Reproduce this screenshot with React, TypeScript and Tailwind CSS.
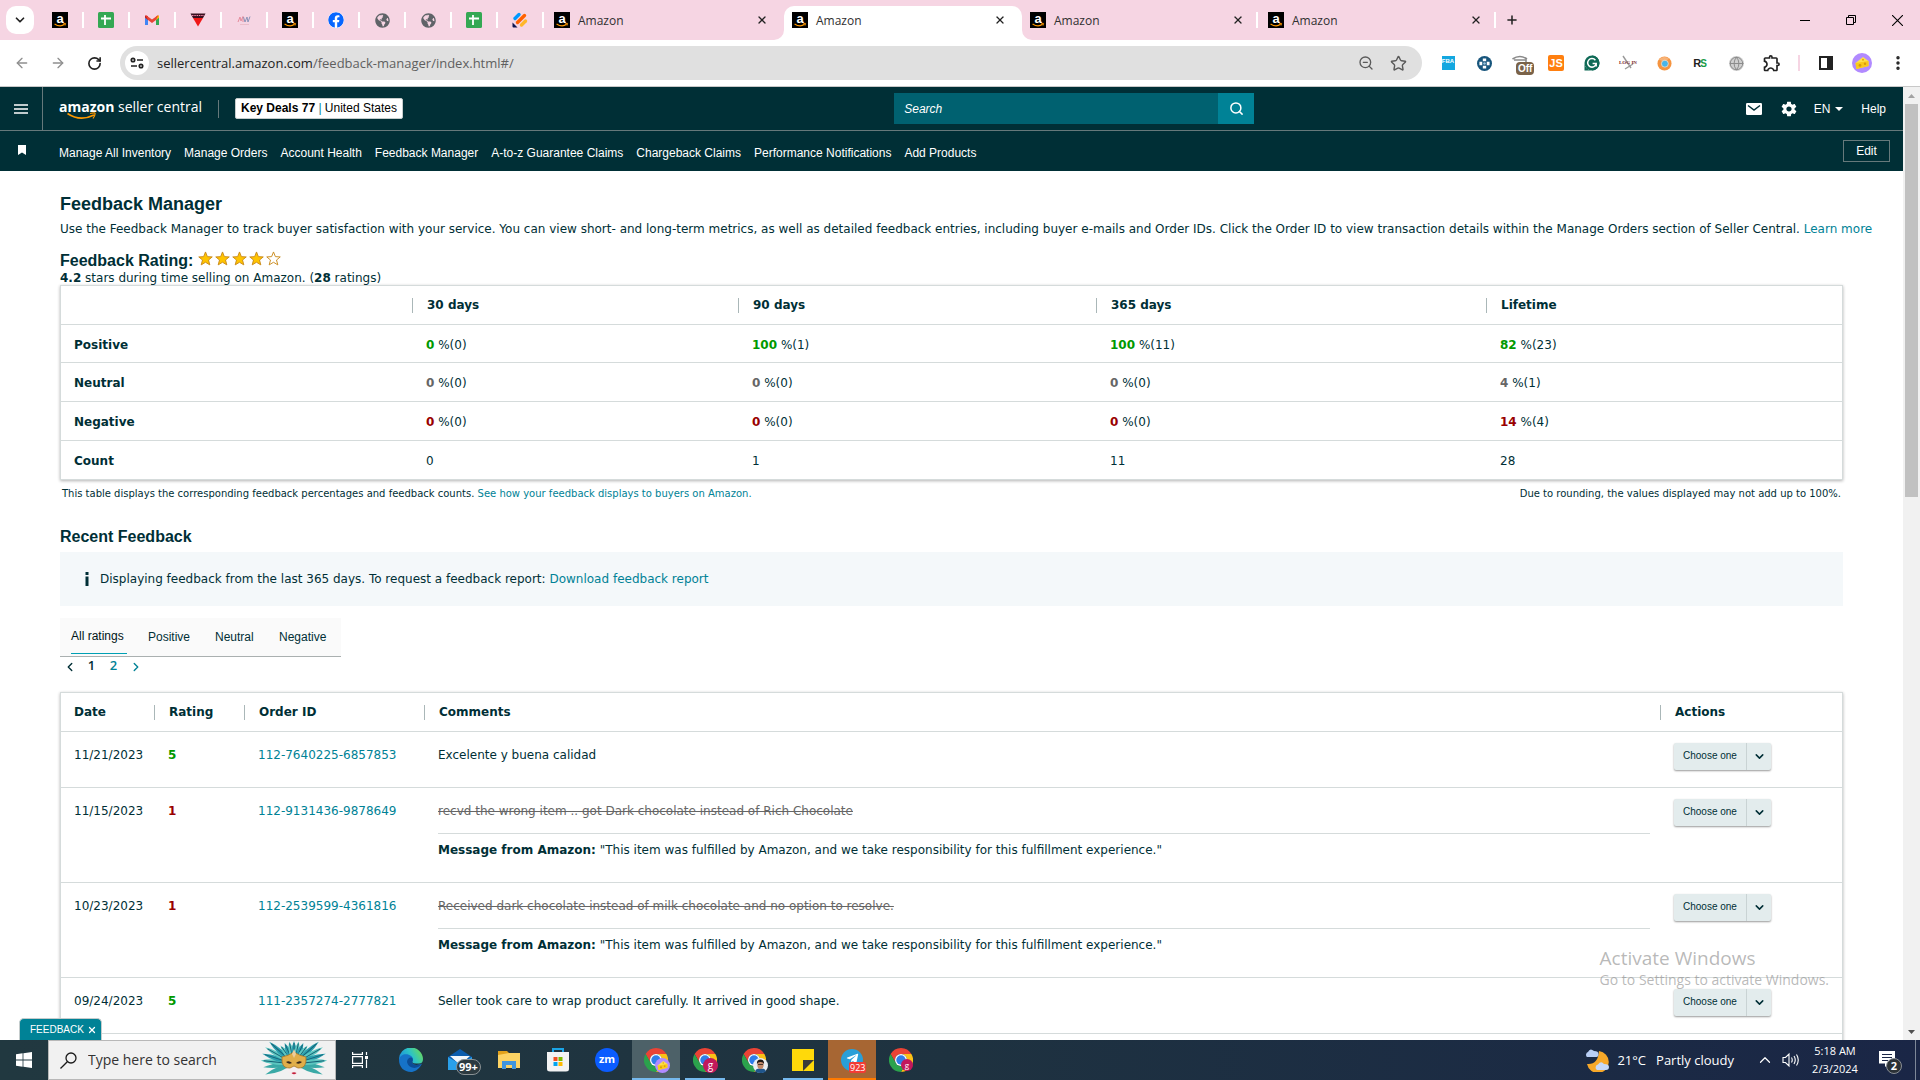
import { memo } from "react";
import type { ReactNode } from "react";
import { ArrowLeft, ArrowRight, ChevronDown, ChevronLeft, ChevronRight, ChevronUp, Globe, MoreVertical, Plus, RotateCw, Search, Star, X, ZoomOut } from "lucide-react";
import { FaFacebook, FaGlobeAmericas, FaTelegramPlane } from "react-icons/fa";
import { IoMdSettings } from "react-icons/io";
import { MdOutlineExtension } from "react-icons/md";

/* ---------- shared icons ---------- */

const AmazonIcon = memo(function AmazonIcon() {
  return (
    <svg viewBox="0 0 16 16" className="size-4 shrink-0 overflow-visible" aria-hidden="true">
      <rect width="16" height="16" fill="#000" />
      <text x="8" y="10.6" textAnchor="middle" fontSize="13" fontWeight="700" fill="#fff" fontFamily="Liberation Sans, sans-serif">
        a
      </text>
      <path d="M2.6 11.9Q8 15.6 12.6 12.3" fill="none" stroke="#f90" strokeWidth="1.2" />
      <path d="M11.3 11.6L13.6 11.4L13 13.6" fill="none" stroke="#f90" strokeWidth="0.9" />
    </svg>
  );
});

function SheetIcon() {
  return (
    <svg viewBox="0 0 16 16" className="size-4" aria-hidden="true">
      <rect width="16" height="16" rx="1.5" fill="#34a853" />
      <path d="M3 6.5H13M7 3V13" stroke="#fff" strokeWidth="1.8" />
    </svg>
  );
}

function GmailIcon() {
  return (
    <svg viewBox="0 0 16 16" className="size-4" aria-hidden="true">
      <path d="M1 4.5V13H4V7Z" fill="#4285f4" />
      <path d="M15 4.5V13H12V7Z" fill="#34a853" />
      <path d="M1 3.5L4 4V8L1 5.8Z" fill="#c5221f" />
      <path d="M15 3.5L12 4V8L15 5.8Z" fill="#fbbc04" />
      <path d="M1.4 2.8L8 7.6L14.6 2.8L12 8L8 11L4 8Z" fill="#ea4335" />
    </svg>
  );
}

function TriangleIcon() {
  return (
    <svg viewBox="0 0 16 16" className="size-4" aria-hidden="true">
      <path d="M0.5 1.5H15.5L13 6H3Z" fill="#3a1020" />
      <path d="M2 3.5H14" stroke="#e8a" strokeWidth="1" strokeDasharray="1.5 0.8" />
      <path d="M3 6H13L8 14.5Z" fill="#f01818" />
    </svg>
  );
}

function ScriptIcon() {
  return (
    <svg viewBox="0 0 16 16" className="size-4" aria-hidden="true">
      <path d="M2 10L4 5L5 9L7 4.5V10" fill="none" stroke="#e58a9a" strokeWidth="1" />
      <path d="M7.5 5L9 10L11 5L12 10L14 4.5" fill="none" stroke="#8b93b8" strokeWidth="1" />
      <path d="M4 12.5H13" stroke="#e9b8c4" strokeWidth="0.8" />
    </svg>
  );
}

function StripesIcon() {
  return (
    <svg viewBox="0 0 16 16" className="size-4" aria-hidden="true">
      <g strokeLinecap="round" strokeWidth="3.4">
        <path d="M3 6.5L7 2.5" stroke="#0099ff" />
        <path d="M5.5 10.5L12.5 3.5" stroke="#ff6100" />
        <path d="M9.5 13L13.5 9" stroke="#ffb629" />
      </g>
      <path d="M0.5 10.5L5.5 15.5H1.5A1 1 0 0 1 0.5 14.5Z" fill="#0a1551" />
    </svg>
  );
}

function ChromeIcon() {
  return (
    <svg viewBox="0 0 48 48" className="size-6" aria-hidden="true">
      <path d="M24 0A24 24 0 0 0 3.2 12L13.6 30A12 12 0 0 1 24 12H44.8A24 24 0 0 0 24 0Z" fill="#ea4335" />
      <path d="M44.8 12H24A12 12 0 0 1 34.4 30L24 48A24 24 0 0 0 44.8 12Z" fill="#fbc116" />
      <path d="M3.2 12A24 24 0 0 0 24 48L34.4 30A12 12 0 0 1 13.6 30Z" fill="#2ba24c" />
      <circle cx="24" cy="24" r="12" fill="#fff" />
      <circle cx="24" cy="24" r="9.5" fill="#2f7de9" />
    </svg>
  );
}

function CheeseIcon({ className }: { className: string }) {
  return (
    <svg viewBox="0 0 20 20" className={className} aria-hidden="true">
      <circle cx="10" cy="10" r="10" fill="#b18aff" />
      <path d="M3.5 10L11 4L16.5 8V13L4.5 16Z" fill="#ffe14a" />
      <path d="M3.5 10L16.5 8V13L4.5 16Z" fill="#f8c91c" />
      <circle cx="8" cy="12.4" r="1.4" fill="#d99a0b" />
      <circle cx="13" cy="10.8" r="1.2" fill="#d99a0b" />
      <circle cx="11" cy="6.7" r="1" fill="#e0a90f" />
    </svg>
  );
}

/* ---------- browser chrome ---------- */

const PINNED: Array<{ name: string; icon: ReactNode }> = [
  { name: "Amazon", icon: <AmazonIcon /> },
  { name: "Sheets", icon: <SheetIcon /> },
  { name: "Gmail", icon: <GmailIcon /> },
  { name: "Triangle", icon: <TriangleIcon /> },
  { name: "Script", icon: <ScriptIcon /> },
  { name: "Amazon orders", icon: <AmazonIcon /> },
  { name: "Facebook", icon: <FaFacebook className="size-4 rounded-full bg-white text-[#0866ff]" /> },
  { name: "Site", icon: <FaGlobeAmericas className="size-[15px] text-[#5f6368]" /> },
  { name: "Site two", icon: <FaGlobeAmericas className="size-[15px] text-[#5f6368]" /> },
  { name: "Sheets two", icon: <SheetIcon /> },
  { name: "Forms", icon: <StripesIcon /> },
];

function BrowserTab({ active = false, divider = false }: { active?: boolean; divider?: boolean }) {
  return (
    <div className={active ? "relative flex w-[238px] items-center rounded-t-[10px] bg-white px-2" : "relative flex w-[238px] items-center px-2"}>
      {active && (
        <>
          <svg viewBox="0 0 10 10" className="absolute bottom-0 -left-[10px] size-[10px]" aria-hidden="true">
            <path d="M10 0V10H0A10 10 0 0 0 10 0Z" fill="#fff" />
          </svg>
          <svg viewBox="0 0 10 10" className="absolute -right-[10px] bottom-0 size-[10px]" aria-hidden="true">
            <path d="M0 0V10H10A10 10 0 0 1 0 0Z" fill="#fff" />
          </svg>
        </>
      )}
      <div className="flex w-full items-center pb-[6px]">
        <AmazonIcon />
        <span className="ml-2 flex-1 pt-px font-['Open_Sans',sans-serif] text-[12px] leading-4 text-[#303030]">Amazon</span>
        <button type="button" aria-label="Close tab" className="mr-2 text-[#222]">
          <X className="size-3" strokeWidth={2.6} />
        </button>
      </div>
      {divider && <span className="absolute top-[6px] right-[2px] h-4 w-[2px] bg-white" />}
    </div>
  );
}

function TabStrip() {
  return (
    <div className="flex h-10 items-stretch bg-[#f6d5e3] pt-[6px]">
      <button type="button" aria-label="Search tabs" className="ml-[6px] flex size-7 items-center justify-center rounded-[10px] bg-white">
        <ChevronDown className="size-[14px] text-[#222]" strokeWidth={3} />
      </button>
      <div className="ml-[3px] flex">
        {PINNED.map((tab) => (
          <button key={tab.name} type="button" aria-label={tab.name} className="relative flex h-7 w-[46px] items-center justify-center">
            {tab.icon}
            <span className="absolute top-[6px] -right-px h-4 w-[2px] bg-white" />
          </button>
        ))}
      </div>
      <div className="ml-[3px] flex">
        <BrowserTab />
        <BrowserTab active />
        <BrowserTab divider />
        <BrowserTab divider />
      </div>
      <button type="button" aria-label="New tab" className="flex size-7 items-center justify-center text-[#222]">
        <Plus className="size-[14px]" strokeWidth={2.6} />
      </button>
      <div className="ml-auto flex h-7 text-black">
        <button type="button" aria-label="Minimize" className="flex w-[46px] items-center justify-center">
          <svg viewBox="0 0 10 10" className="size-[10px]">
            <path d="M0 5.5H10" stroke="currentColor" />
          </svg>
        </button>
        <button type="button" aria-label="Restore" className="flex w-[46px] items-center justify-center">
          <svg viewBox="0 0 10 10" className="size-[10px]" fill="none" stroke="currentColor">
            <path d="M0.5 2.5H7.5V9.5H0.5ZM2.5 2.5V0.5H9.5V7.5H7.5" />
          </svg>
        </button>
        <button type="button" aria-label="Close" className="flex w-[46px] items-center justify-center">
          <svg viewBox="0 0 10 10" className="size-[11px]" stroke="currentColor">
            <path d="M0 0L10 10M10 0L0 10" />
          </svg>
        </button>
      </div>
    </div>
  );
}

const EXTENSIONS: Array<{ name: string; icon: ReactNode }> = [
  {
    name: "FBA",
    icon: (
      <span className="flex h-[14px] w-[13px] items-start justify-center bg-[#13a7e0] pt-px font-['Liberation_Sans',sans-serif] text-[6px] leading-[8px] font-bold text-white">FBA</span>
    ),
  },
  {
    name: "Helper",
    icon: (
      <svg viewBox="0 0 16 16" className="size-[15px]">
        <circle cx="8" cy="8" r="8" fill="#17557c" />
        <path d="M6.2 2.6H9.8V5.6H6.2ZM6.2 10.4H9.8V13.4H6.2ZM2.6 6.2H5.6V9.8H2.6ZM10.4 6.2H13.4V9.8H10.4Z" fill="#fff" />
        <circle cx="8" cy="8" r="1.4" fill="#9cc4dc" />
      </svg>
    ),
  },
  {
    name: "Switch",
    icon: (
      <span className="relative block size-4">
        <svg viewBox="0 0 16 16" className="size-4" fill="none" stroke="#8a8a8a">
          <path d="M0.5 4Q8 -1 15 4M2 5H14V13H5" strokeWidth="1.6" />
        </svg>
        <span className="absolute top-[7px] left-1 rounded-[4px] bg-[#7a6248] px-[2px] font-['Liberation_Sans',sans-serif] text-[10px] leading-[13px] font-bold text-white">Off</span>
      </span>
    ),
  },
  {
    name: "JS",
    icon: <span className="flex size-4 items-center justify-center rounded-[2px] bg-[#ff7f0f] font-['Liberation_Sans',sans-serif] text-[11px] leading-4 font-bold text-white">JS</span>,
  },
  {
    name: "Grammar",
    icon: (
      <svg viewBox="0 0 16 16" className="size-4">
        <path d="M8 0.5A7.5 7.5 0 1 1 0.5 8V15.5H8Z" fill="#0f6a56" />
        <circle cx="8" cy="8" r="7.5" fill="#0f6a56" />
        <path d="M11.4 5.2A4.3 4.3 0 1 0 12.2 8.6H8.6M12.2 8.6V11.5" fill="none" stroke="#fff" strokeWidth="1.5" />
      </svg>
    ),
  },
  {
    name: "Log in",
    icon: (
      <svg viewBox="0 0 18 16" className="h-4 w-[18px] overflow-visible">
        <path d="M4 1L12 13M6 14L14 9" stroke="#999" strokeWidth="1.4" />
        <text x="9" y="8.5" textAnchor="middle" fontSize="5" fontWeight="700" fill="#7a1f2b" fontFamily="Liberation Serif, serif">
          LOG IN
        </text>
      </svg>
    ),
  },
  {
    name: "Orb",
    icon: (
      <svg viewBox="0 0 16 16" className="size-[15px]">
        <circle cx="8" cy="8" r="7.5" fill="#f59440" />
        <path d="M2 4A7.5 7.5 0 0 1 13 3L8 6Z" fill="#f7b277" />
        <circle cx="8.4" cy="8.2" r="3.7" fill="#48b5ea" stroke="#fde0c4" strokeWidth="0.8" />
      </svg>
    ),
  },
  {
    name: "RS",
    icon: (
      <span className="flex font-['Liberation_Sans',sans-serif] text-[11px] leading-4 font-bold text-[#222]">
        R<span className="-ml-px pt-px text-[10px] text-[#169b48]">S</span>
      </span>
    ),
  },
  { name: "Globe", icon: <Globe className="size-[15px] rounded-full bg-[#cfcfcf] text-[#8c8c8c]" strokeWidth={1.6} /> },
  { name: "Extensions", icon: <MdOutlineExtension className="size-[20px] text-[#222]" /> },
];

function Toolbar() {
  return (
    <div className="flex h-[47px] shrink-0 items-center border-b border-[#c8c8c8] bg-white px-1">
      <button type="button" aria-label="Back" className="flex w-9 justify-center text-[#8f8f8f]">
        <ArrowLeft className="size-4" />
      </button>
      <button type="button" aria-label="Forward" className="flex w-9 justify-center text-[#8f8f8f]">
        <ArrowRight className="size-4" />
      </button>
      <button type="button" aria-label="Reload" className="flex w-9 justify-center text-[#222]">
        <RotateCw className="size-[15px]" strokeWidth={2.6} />
      </button>
      <div className="mx-2 flex h-[34px] flex-1 items-center rounded-full bg-[#e0e0e0] pl-[5px]">
        <span className="flex size-6 items-center justify-center rounded-full bg-white">
          <svg viewBox="0 0 14 12" className="h-3 w-[14px]" fill="none" stroke="#222" strokeWidth="1.7" aria-hidden="true">
            <circle cx="3" cy="3" r="1.7" />
            <path d="M7 3H13M1 9H7" />
            <circle cx="11" cy="9" r="1.7" />
          </svg>
        </span>
        <div className="ml-2 flex-1 font-['Open_Sans',sans-serif] text-[13px] leading-5 text-[#5f5f5f]">
          <span className="text-[#222]">sellercentral.amazon.com</span>/feedback-manager/index.html#/
        </div>
        <button type="button" aria-label="Zoom" className="flex w-8 justify-center text-[#5a5a5a]">
          <ZoomOut className="size-4" />
        </button>
        <button type="button" aria-label="Bookmark this page" className="mr-2 flex w-8 justify-center text-[#5a5a5a]">
          <Star className="size-[17px]" />
        </button>
      </div>
      {EXTENSIONS.map((ext) => (
        <button key={ext.name} type="button" aria-label={ext.name} className="flex w-9 items-center justify-center">
          {ext.icon}
        </button>
      ))}
      <span className="mx-2 h-4 w-[2px] bg-[#f6d5e3]" />
      <button type="button" aria-label="Side panel" className="flex w-9 justify-center">
        <svg viewBox="0 0 14 14" className="size-[14px]">
          <rect x="1" y="1" width="12" height="12" fill="none" stroke="#222" strokeWidth="2" />
          <path d="M8 1H13V13H8Z" fill="#222" />
        </svg>
      </button>
      <button type="button" aria-label="Profile" className="flex w-9 justify-center">
        <CheeseIcon className="size-5" />
      </button>
      <button type="button" aria-label="Browser menu" className="flex w-9 justify-center text-[#222]">
        <MoreVertical className="size-[18px]" strokeWidth={2.6} />
      </button>
    </div>
  );
}

/* ---------- Seller Central header ---------- */

const NAV_ITEMS = ["Manage All Inventory", "Manage Orders", "Account Health", "Feedback Manager", "A-to-z Guarantee Claims", "Chargeback Claims", "Performance Notifications", "Add Products"];

function SellerHeader() {
  return (
    <header className="bg-[#002f36] font-['Liberation_Sans',sans-serif] text-[12px] text-white">
      <div className="flex h-11 items-center justify-between border-b border-[#66797b]">
        <div className="flex h-full items-center">
          <button type="button" aria-label="Menu" className="flex h-full w-[43px] items-center justify-center border-r border-[#66797b]">
            <svg viewBox="0 0 14 10" className="h-[10px] w-[14px]" stroke="#fff" strokeWidth="1.6">
              <path d="M0 1H14M0 5H14M0 9H14" />
            </svg>
          </button>
          <a href="#" className="relative ml-4 pb-1 font-['Open_Sans',sans-serif] text-[14px] leading-5 whitespace-nowrap">
            <b>amazon</b> seller central
            <svg viewBox="0 0 30 9" className="absolute top-[15px] left-2 h-[9px] w-[30px]" fill="none" stroke="#f90" aria-hidden="true">
              <path d="M0.5 1.5Q13 10 27 3" strokeWidth="1.6" />
              <path d="M23 1.5Q29 0 28 2Q28 4 26 6.5" strokeWidth="1.2" />
            </svg>
          </a>
          <span className="ml-4 h-[18px] w-px bg-[#66797b]" />
          <button type="button" className="ml-4 rounded-[2px] border border-[#c6cccc] bg-white px-[5px] text-[12px] leading-[19px] whitespace-nowrap text-[#000]">
            <b>Key Deals 77</b> <span className="text-[#008296]">|</span> United States
          </button>
        </div>
        <form className="flex h-[31px] w-[360px]">
          <input type="text" aria-label="Search" placeholder="Search" className="min-w-0 flex-1 bg-[#006170] px-[10px] text-[12px] text-white italic outline-none placeholder:text-white" />
          <button type="button" aria-label="Submit search" className="flex w-9 items-center justify-center bg-[#008296]">
            <Search className="size-[15px]" strokeWidth={2.4} />
          </button>
        </form>
        <div className="mr-[17px] flex items-center">
          <a href="#" aria-label="Messages">
            <svg viewBox="0 0 16 12" className="h-3 w-4">
              <rect width="16" height="12" rx="1.2" fill="#fff" />
              <path d="M2 2.5L8 7L14 2.5" fill="none" stroke="#002f36" strokeWidth="1.5" />
            </svg>
          </a>
          <a href="#" aria-label="Settings" className="ml-[18px]">
            <IoMdSettings className="size-[18px]" />
          </a>
          <button type="button" className="ml-4 flex items-center gap-[5px]">
            EN
            <svg viewBox="0 0 8 4" className="h-1 w-2" fill="#fff">
              <path d="M0 0H8L4 4Z" />
            </svg>
          </button>
          <a href="#" className="ml-[18px]">
            Help
          </a>
        </div>
      </div>
      <div className="flex h-10 items-center">
        <button type="button" aria-label="Favorites" className="flex w-[43px] justify-center pb-[2px]">
          <svg viewBox="0 0 8 10" className="h-[10px] w-2" fill="#fff">
            <path d="M0 0H8V10L4 7.5L0 10Z" />
          </svg>
        </button>
        <nav className="ml-4 flex gap-[13px] pt-1 leading-4 whitespace-nowrap">
          {NAV_ITEMS.map((item) => (
            <a key={item} href="#">
              {item}
            </a>
          ))}
        </nav>
        <button type="button" className="mr-[13px] ml-auto h-[22px] w-[47px] border border-[#66797b]">
          Edit
        </button>
      </div>
    </header>
  );
}

/* ---------- feedback content ---------- */

const SUMMARY_HEAD = ["30 days", "90 days", "365 days", "Lifetime"];

const SUMMARY_ROWS = [
  { label: "Positive", height: "h-[38px]", tone: "text-[#009900]", cells: [["0", "0"], ["100", "1"], ["100", "11"], ["82", "23"]] },
  { label: "Neutral", height: "h-[39px]", tone: "text-[#666666]", cells: [["0", "0"], ["0", "0"], ["0", "0"], ["4", "1"]] },
  { label: "Negative", height: "h-[39px]", tone: "text-[#990000]", cells: [["0", "0"], ["0", "0"], ["0", "0"], ["14", "4"]] },
];

const COUNTS = ["0", "1", "11", "28"];

function HeadCell({ children }: { children: ReactNode }) {
  return (
    <th scope="col" className="border-b border-[#d5dbdb] p-0 text-left">
      <span className="flex items-center">
        <span className="h-[15px] w-px bg-[#aab7b8]" />
        <span className="pl-[14px]">{children}</span>
      </span>
    </th>
  );
}

function SummaryTable() {
  return (
    <div className="border border-[#d5dbdb] shadow-[0_1px_3px_rgba(0,0,0,0.3)]">
      <table className="w-full table-fixed border-separate border-spacing-0">
        <colgroup>
          <col className="w-[351px]" />
          <col className="w-[326px]" />
          <col className="w-[358px]" />
          <col className="w-[390px]" />
          <col />
        </colgroup>
        <thead>
          <tr className="h-[39px]">
            <td className="border-b border-[#d5dbdb]" />
            {SUMMARY_HEAD.map((title) => (
              <HeadCell key={title}>{title}</HeadCell>
            ))}
          </tr>
        </thead>
        <tbody>
          {SUMMARY_ROWS.map((row) => (
            <tr key={row.label} className={row.height}>
              <th scope="row" className="border-b border-[#d5dbdb] pt-[2px] pb-0 pl-[13px] text-left">
                {row.label}
              </th>
              {row.cells.map(([pct, count], i) => (
                <td key={i} className="border-b border-[#d5dbdb] pt-[2px] pb-0 pl-[14px]">
                  <b className={row.tone}>{pct}</b> %({count})
                </td>
              ))}
            </tr>
          ))}
          <tr className="h-[38px]">
            <th scope="row" className="pt-[2px] pb-0 pl-[13px] text-left">
              Count
            </th>
            {COUNTS.map((count) => (
              <td key={count} className="pt-[2px] pb-0 pl-[14px]">
                {count}
              </td>
            ))}
          </tr>
        </tbody>
      </table>
    </div>
  );
}

interface Feedback {
  date: string;
  rating: number;
  order: string;
  comment: string;
  struck?: boolean;
}

const FEEDBACK: Feedback[] = [
  { date: "11/21/2023", rating: 5, order: "112-7640225-6857853", comment: "Excelente y buena calidad" },
  { date: "11/15/2023", rating: 1, order: "112-9131436-9878649", comment: "recvd the wrong item .. got Dark chocolate instead of Rich Chocolate", struck: true },
  { date: "10/23/2023", rating: 1, order: "112-2539599-4361816", comment: "Received dark chocolate instead of milk chocolate and no option to resolve.", struck: true },
  { date: "09/24/2023", rating: 5, order: "111-2357274-2777821", comment: "Seller took care to wrap product carefully. It arrived in good shape." },
];

function ActionSelect({ order }: { order: string }) {
  return (
    <div className="relative h-[27px] w-[97px] rounded-[2px] bg-[#e3eced] shadow-[0_1px_2px_rgba(0,0,0,0.4)]">
      <select aria-label={`Action for order ${order}`} className="h-full w-full appearance-none bg-transparent pr-6 pb-[2px] pl-[9px] font-['Liberation_Sans',sans-serif] text-[10px] text-[#002f36] outline-none">
        <option>Choose one</option>
      </select>
      <span className="pointer-events-none absolute inset-y-0 right-0 flex w-[25px] items-center justify-center border-l border-[#c9d3d4]">
        <ChevronDown className="size-[13px]" strokeWidth={2.8} />
      </span>
    </div>
  );
}

function FeedbackTable() {
  return (
    <div className="border border-[#d5dbdb] shadow-[0_1px_3px_rgba(0,0,0,0.3)]">
      <table className="w-full table-fixed border-separate border-spacing-0">
        <colgroup>
          <col className="w-[93px]" />
          <col className="w-[90px]" />
          <col className="w-[180px]" />
          <col />
          <col className="w-[182px]" />
        </colgroup>
        <thead>
          <tr className="h-[39px]">
            <th scope="col" className="border-b border-[#d5dbdb] py-0 pl-[13px] text-left">
              Date
            </th>
            <HeadCell>Rating</HeadCell>
            <HeadCell>Order ID</HeadCell>
            <HeadCell>Comments</HeadCell>
            <HeadCell>Actions</HeadCell>
          </tr>
        </thead>
        <tbody>
          {FEEDBACK.map((row) => (
            <tr key={row.order} className={row.struck ? "h-[95px] align-top" : "h-14 align-top"}>
              <td className="border-b border-[#d5dbdb] pt-[15px] pl-[13px]">{row.date}</td>
              <td className={row.rating > 3 ? "border-b border-[#d5dbdb] pt-[15px] pl-[14px] font-bold text-[#009900]" : "border-b border-[#d5dbdb] pt-[15px] pl-[14px] font-bold text-[#990000]"}>{row.rating}</td>
              <td className="border-b border-[#d5dbdb] pt-[15px] pl-[14px]">
                <a href="#" className="text-[#008296]">
                  {row.order}
                </a>
              </td>
              <td className="border-b border-[#d5dbdb] pt-[15px] pr-[10px] pl-[14px]">
                {row.struck ? (
                  <>
                    <p className="pb-[14px] text-[#666] line-through">{row.comment}</p>
                    <p className="border-t border-[#d5dbdb] pt-2">
                      <b>Message from Amazon:</b> "This item was fulfilled by Amazon, and we take responsibility for this fulfillment experience."
                    </p>
                  </>
                ) : (
                  <p>{row.comment}</p>
                )}
              </td>
              <td className="border-b border-[#d5dbdb] pt-[11px] pl-[14px]">
                <ActionSelect order={row.order} />
              </td>
            </tr>
          ))}
          <tr className="h-14">
            <td colSpan={5} />
          </tr>
        </tbody>
      </table>
    </div>
  );
}

function RatingStar({ filled }: { filled: boolean }) {
  return (
    <svg viewBox="0 0 16 16" className="size-[15px]" aria-hidden="true">
      <path d="M8 1L10 6L15.2 6.3L11.2 9.6L12.6 14.8L8 12L3.4 14.8L4.8 9.6L0.8 6.3L6 6Z" fill={filled ? "#ffc400" : "#fff"} stroke="#c98a1b" strokeWidth="1" />
    </svg>
  );
}

function FeedbackPage() {
  return (
    <main className="px-[60px] pt-[21px] font-['DejaVu_Sans',Verdana,sans-serif] text-[12px] leading-4 text-[#002f36]">
      <h1 className="font-['Liberation_Sans',sans-serif] text-[18px] leading-6 font-bold">Feedback Manager</h1>
      <p className="mt-[5px] whitespace-nowrap">
        Use the Feedback Manager to track buyer satisfaction with your service. You can view short- and long-term metrics, as well as detailed feedback entries, including buyer e-mails and Order IDs. Click the Order ID to view transaction details within the
        Manage Orders section of Seller Central.{" "}
        <a href="#" className="text-[#008296]">
          Learn more
        </a>
      </p>
      <div className="mt-[14px] flex h-5 items-center">
        <h2 className="font-['Liberation_Sans',sans-serif] text-[16px] leading-5 font-bold">Feedback Rating:</h2>
        <span className="ml-[5px] flex gap-[2px] pb-[6px]" role="img" aria-label="4 out of 5 stars">
          {[1, 2, 3, 4, 5].map((n) => (
            <RatingStar key={n} filled={n <= 4} />
          ))}
        </span>
      </div>
      <p className="leading-[14px]">
        <b>4.2</b> stars during time selling on Amazon. (<b>28</b> ratings)
      </p>
      <SummaryTable />
      <div className="mt-2 flex justify-between px-[2px] text-[10px] leading-3">
        <p>
          This table displays the corresponding feedback percentages and feedback counts.{" "}
          <a href="#" className="text-[#008296]">
            See how your feedback displays to buyers on Amazon.
          </a>
        </p>
        <p>Due to rounding, the values displayed may not add up to 100%.</p>
      </div>

      <h2 className="mt-[27px] font-['Liberation_Sans',sans-serif] text-[16px] leading-5 font-bold">Recent Feedback</h2>
      <div className="mt-[5px] flex h-[54px] items-center bg-[#f4f8fa] pl-6">
        <svg viewBox="0 0 6 14" className="h-[14px] w-[6px]" fill="#002f36" aria-hidden="true">
          <path d="M1.5 0H4.5V3H1.5ZM1.5 4.5H4.5V14H1.5Z" />
        </svg>
        <p className="ml-[10px]">
          Displaying feedback from the last 365 days. To request a feedback report:{" "}
          <a href="#" className="text-[#008296]">
            Download feedback report
          </a>
        </p>
      </div>

      <div className="mt-3 flex h-[39px] w-[281px] items-stretch border-b border-[#aab0b0] bg-[#fafafa] pl-[11px] font-['Liberation_Sans',sans-serif] leading-[37px]">
        <button type="button" className="mb-[2px] w-14 border-b border-[#00a0b4] text-left text-[#001518]">
          All ratings
        </button>
        <button type="button" className="ml-[21px] w-[67px] text-left">
          Positive
        </button>
        <button type="button" className="w-[64px] text-left">
          Neutral
        </button>
        <button type="button" className="text-left">
          Negative
        </button>
      </div>
      <nav aria-label="Pages" className="mb-[15px] flex h-5 items-center gap-[3px] pb-1 font-['Open_Sans',sans-serif] text-[13px] font-semibold">
        <a href="#" aria-label="Previous page" className="flex w-[19px] justify-center pt-1">
          <ChevronLeft className="size-[14px]" strokeWidth={2.4} />
        </a>
        <a href="#" className="w-[19px] text-center">
          1
        </a>
        <a href="#" className="w-[19px] text-center text-[#008296]">
          2
        </a>
        <a href="#" aria-label="Next page" className="flex w-[19px] justify-center pt-1 text-[#008296]">
          <ChevronRight className="size-[14px]" strokeWidth={2.4} />
        </a>
      </nav>
      <FeedbackTable />
    </main>
  );
}

function Scrollbar() {
  return (
    <div className="flex w-[17px] shrink-0 flex-col items-center bg-[#f1f1f1]" aria-hidden="true">
      <svg viewBox="0 0 17 17" className="size-[17px]">
        <path d="M5 11H12L8.500 7Z" fill="#a3a3a3" />
      </svg>
      <div className="h-[393px] w-[13px] bg-[#c1c1c1]" />
      <svg viewBox="0 0 17 17" className="mt-auto size-[17px]">
        <path d="M5 7H12L8.500 11Z" fill="#505050" />
      </svg>
    </div>
  );
}

/* ---------- Windows taskbar ---------- */

const FEATHERS = [-84, -72, -60, -48, -36, -24, -12, 0, 12, 24, 36, 48, 60, 72, 84];

function MaskArt() {
  return (
    <svg viewBox="0 0 72 38" className="h-[38px] w-[72px]" aria-hidden="true">
      {[-98, 98, -112, 112].map((deg) => (
        <path key={deg} d="M0 0Q-5 -14 0 -31Q5 -14 0 0Z" fill="#3aa9a6" transform={`translate(36 22) rotate(${deg})`} />
      ))}
      {FEATHERS.map((deg, i) => (
        <g key={deg} transform={`translate(36 23) rotate(${deg}) scale(1 ${Math.abs(deg) > 45 ? 1.45 : 1})`}>
          <path d="M0 0Q-5 -13 0 -23Q5 -13 0 0Z" fill={i % 2 ? "#2b9fae" : "#5cc6c0"} />
          <path d="M0 -3V-21" stroke="#155f74" strokeWidth="0.9" />
        </g>
      ))}
      <path d="M29 22Q28 32 36 37.500Q44 32 43 22Z" fill="#f5eef0" />
      <path d="M24 16Q30 15 36 11Q42 15 48 16Q49 28 40 27L36 25L32 27Q23 28 24 16Z" fill="#e0ae4a" stroke="#a87526" strokeWidth="0.8" />
      <path d="M28 21Q31 19 34 22Q31 24 28 21ZM44 21Q41 19 38 22Q41 24 44 21Z" fill="#33261c" />
      <path d="M36 8L38 13L36 17L34 13Z" fill="#eccd9c" />
      <path d="M33.500 32Q36 30.500 38.500 32Q36 34.500 33.500 32Z" fill="#c41e3a" />
    </svg>
  );
}

const TASK_ICONS: Array<{ name: string; cell: string; bar: string; icon: ReactNode }> = [
  {
    name: "Edge",
    cell: "",
    bar: "",
    icon: (
      <svg viewBox="0 0 24 24" className="size-6">
        <defs>
          <linearGradient id="edge" x1="0" y1="0.6" x2="1" y2="0.2">
            <stop offset="0" stopColor="#1b8fdc" />
            <stop offset="0.5" stopColor="#2cc3c6" />
            <stop offset="1" stopColor="#6fdc52" />
          </linearGradient>
        </defs>
        <path d="M0 12A12 12 0 0 1 24 11Q24 16 19 15.500Q14 16 13 14Q14 13 13 11L5 9Z" fill="url(#edge)" />
        <path d="M0 12C1 6 8 5 12 8C15 10 14 13 13 14C13 17 18 18 23 15.500C20 22 15 24 12 24C5 24 0 19 0 12Z" fill="#1673c8" />
        <path d="M8 14C8 11 10 9.500 12 9.500C14.500 10 14 13 13 14C13 17 18 18 22.500 16C20 21 10 22 8 14Z" fill="#0c4d96" />
      </svg>
    ),
  },
  {
    name: "Mail",
    cell: "",
    bar: "",
    icon: (
      <span className="relative block size-6">
        <svg viewBox="0 0 24 24" className="size-6">
          <path d="M0 9L12 1L24 9V22H0Z" fill="#0b5cad" />
          <path d="M2 8H22L12 17Z" fill="#f2f6fb" />
          <path d="M0 9L12 16L24 9V22H0Z" fill="#2aa0ea" />
        </svg>
        <span className="absolute top-[11px] left-2 rounded-full border border-[#8a9194] bg-[#2c3a40] px-[2px] font-['Open_Sans',sans-serif] text-[11px] leading-[14px] font-bold text-white">99+</span>
      </span>
    ),
  },
  {
    name: "File Explorer",
    cell: "",
    bar: "",
    icon: (
      <svg viewBox="0 0 22 20" className="h-5 w-[22px]">
        <path d="M0 1H9L11 3V6H0Z" fill="#e2a21b" />
        <path d="M0 5L11 3H22V18H0Z" fill="#fcd364" />
        <path d="M4 11H18V19H14V15H8V19H4Z" fill="#3f95de" />
      </svg>
    ),
  },
  {
    name: "Store",
    cell: "",
    bar: "",
    icon: (
      <svg viewBox="0 0 24 24" className="size-6">
        <path d="M7 5V1H17V5" fill="none" stroke="#1ba4e6" strokeWidth="2" />
        <path d="M1 4H23V21Q23 23.500 20 23.500H4Q1 23.500 1 21Z" fill="#f3f3f3" />
        <path d="M7.500 9H11.500V13H7.500Z" fill="#f25022" />
        <path d="M12.500 9H16.500V13H12.500Z" fill="#7fba00" />
        <path d="M7.500 14H11.500V18H7.500Z" fill="#00a4ef" />
        <path d="M12.500 14H16.500V18H12.500Z" fill="#ffb900" />
      </svg>
    ),
  },
  {
    name: "Zoom",
    cell: "",
    bar: "",
    icon: <span className="flex size-6 items-center justify-center rounded-full bg-[#0b5cff] pb-[2px] font-['Open_Sans',sans-serif] text-[11px] leading-4 font-bold text-white">zm</span>,
  },
  {
    name: "Chrome",
    cell: "bg-[#4d6168]",
    bar: "w-12 bg-[#76b9ed]",
    icon: (
      <span className="relative block">
        <ChromeIcon />
        <CheeseIcon className="absolute top-[10px] left-[11px] size-[15px]" />
      </span>
    ),
  },
  {
    name: "Chrome work",
    cell: "",
    bar: "w-10 bg-[#76b9ed]",
    icon: (
      <span className="relative block">
        <ChromeIcon />
        <span className="absolute top-[10px] left-[10px] flex size-[15px] items-center justify-center rounded-full bg-[#c2185b] pb-[2px] font-['Open_Sans',sans-serif] text-[10px] leading-3 text-white">g</span>
      </span>
    ),
  },
  {
    name: "Chrome personal",
    cell: "",
    bar: "",
    icon: (
      <span className="relative block">
        <ChromeIcon />
        <svg viewBox="0 0 15 15" className="absolute top-[10px] left-[11px] size-[15px]">
          <circle cx="7.5" cy="7.5" r="7.5" fill="#e9eef3" />
          <path d="M2 13.500Q3 10 7.500 10.500Q12 10 13 13.500Q7.500 16.500 2 13.500Z" fill="#20568c" />
          <ellipse cx="7.500" cy="6.800" rx="3.200" ry="4.300" fill="#c48a6a" />
          <path d="M4 6Q3.500 1.500 7.500 1.500Q11.500 1.500 11 6Q10 3.800 7.500 4Q5 3.800 4 6Z" fill="#1d1613" />
          <path d="M5 6.500H10" stroke="#2d2320" strokeWidth="0.8" />
        </svg>
      </span>
    ),
  },
  {
    name: "Sticky Notes",
    cell: "",
    bar: "w-10 bg-[#76b9ed]",
    icon: (
      <svg viewBox="0 0 22 22" className="size-[22px]">
        <path d="M0 0H22V22H0Z" fill="#ffd90a" />
        <path d="M11 11H22L11 22Z" fill="#3a3a3a" />
      </svg>
    ),
  },
  {
    name: "Telegram",
    cell: "bg-[#a76633]",
    bar: "w-12 bg-[#ff7a00]",
    icon: (
      <span className="relative block size-[22px]">
        <span className="flex size-[22px] items-center justify-center rounded-full bg-[#2a9fd8] pb-1 text-white">
          <FaTelegramPlane className="size-[13px]" />
        </span>
        <span className="absolute top-[13px] left-2 rounded-[2px] bg-[#f23c34] px-px font-['Open_Sans',sans-serif] text-[9px] leading-[11px] text-white">923</span>
      </span>
    ),
  },
  {
    name: "Chrome guest",
    cell: "",
    bar: "",
    icon: (
      <span className="relative block">
        <ChromeIcon />
        <span className="absolute top-[11px] left-3 flex size-3 items-center justify-center rounded-full bg-[#c2185b] pb-px font-['Open_Sans',sans-serif] text-[8px] leading-[10px] text-white">g</span>
      </span>
    ),
  },
];

function Taskbar() {
  return (
    <footer className="flex h-10 shrink-0 items-stretch bg-linear-to-r from-[#213840] via-[#1e3240] to-[#1a2646] font-['Open_Sans',sans-serif] text-white">
      <button type="button" aria-label="Start" className="flex w-12 items-center justify-center">
        <svg viewBox="0 0 16 16" className="size-4" fill="#fff">
          <path d="M0 2.200L6.600 1.300V7.600H0ZM7.400 1.200L16 0V7.600H7.400ZM0 8.400H6.600V14.700L0 13.800ZM7.400 8.400H16V16L7.400 14.800Z" />
        </svg>
      </button>
      <label className="flex w-72 items-center border border-[#b8b8b8] bg-[#f1f1f1] pl-[11px] text-[#222]">
        <svg viewBox="0 0 17 17" className="size-[17px]" fill="none" stroke="#1a1a1a" strokeWidth="1.3" aria-hidden="true">
          <circle cx="11" cy="6" r="5" />
          <path d="M7.300 9.700L0.500 16.500" />
        </svg>
        <input type="text" aria-label="Type here to search" placeholder="Type here to search" className="ml-[11px] min-w-0 flex-1 bg-transparent text-[14px] leading-5 outline-none placeholder:text-[#333]" />
        <MaskArt />
        <span className="w-[5px]" />
      </label>
      <button type="button" aria-label="Task view" className="flex w-12 items-center justify-center">
        <svg viewBox="0 0 17 16" className="h-4 w-[17px]" fill="none" stroke="#fff" strokeWidth="1.2">
          <path d="M0.600 4.600H10.400V11.400H0.600ZM0.600 0V2.400H10.400V0M0.600 16V13.600H10.400V16M14.500 0V3M14.500 7.500V16" />
          <path d="M13 4H16V7H13Z" fill="#fff" stroke="none" />
        </svg>
      </button>
      <div className="ml-[3px] flex gap-px">
        {TASK_ICONS.map((task) => (
          <button key={task.name} type="button" aria-label={task.name} className={`relative flex w-12 items-center justify-center ${task.cell}`}>
            {task.icon}
            {task.bar && <span className={`absolute bottom-0 left-1/2 h-[2px] -translate-x-1/2 ${task.bar}`} />}
          </button>
        ))}
      </div>
      <div className="ml-auto flex items-center text-[13px] leading-5">
        <svg viewBox="0 0 24 24" className="size-6" aria-hidden="true">
          <path d="M14 3A11 11 0 1 1 2 16Q13 17 14 3Z" fill="#f7a829" />
          <path d="M2 9A3 3 0 0 1 3 4Q5 -0.500 9 3Q14 3 13.500 7Q13 9.500 11 9Z" fill="#b9cff5" />
          <path d="M12 22A3 3 0 0 1 13 16.500Q16 12.500 19 16Q24 16 24 19Q24 22 21 22Z" fill="#c6d8f8" />
        </svg>
        <span className="ml-2">21°C</span>
        <span className="ml-[10px]">Partly cloudy</span>
        <ChevronUp className="ml-[22px] size-[18px]" strokeWidth={1.6} />
        <svg viewBox="0 0 18 16" className="ml-2 h-4 w-[18px]" fill="none" stroke="#fff" strokeWidth="1.1" aria-hidden="true">
          <path d="M1 5.500H3.500L7 2V14L3.500 10.500H1ZM9.500 5.500Q11 8 9.500 10.500M12 4Q14.500 8 12 12M14.500 2.500Q18 8 14.500 13.500" />
        </svg>
        <div className="ml-2 w-[54px] text-center text-[11px] leading-[18px] whitespace-nowrap">
          <div>5:18 AM</div>
          <div>2/3/2024</div>
        </div>
        <button type="button" aria-label="Notifications" className="relative ml-[17px] size-[26px]">
          <svg viewBox="0 0 16 16" className="absolute top-1 left-0 size-4">
            <path d="M0 0H16V12.500H10L6 16V12.500H0Z" fill="#fff" />
            <path d="M3 3.500H13M3 6.500H13M3 9.500H9" stroke="#1a2646" />
          </svg>
          <span className="absolute top-[11px] left-[7px] flex size-4 items-center justify-center rounded-full border border-[#8a8f96] bg-[#2b3136] text-[11px] leading-3 font-bold">2</span>
        </button>
        <span className="ml-[10px] h-10 w-px bg-[#7d8798]" />
        <span className="w-1" />
      </div>
    </footer>
  );
}

export default function App() {
  return (
    <div className="relative flex h-screen flex-col overflow-hidden bg-white">
      <TabStrip />
      <Toolbar />
      <div className="flex min-h-0 flex-1">
        <div className="relative min-w-0 flex-1 overflow-hidden">
          <SellerHeader />
          <FeedbackPage />
          <div className="absolute bottom-0 left-[19px] flex h-[22px] items-center gap-[3px] rounded-t-[5px] border border-b-0 border-[#c5cccc] bg-[#008296] pr-1 pl-[10px] font-['Liberation_Sans',sans-serif] text-[10px] leading-4 text-white">
            <button type="button">FEEDBACK</button>
            <button type="button" aria-label="Dismiss feedback">
              <X className="size-[10px]" strokeWidth={3} />
            </button>
          </div>
        </div>
        <Scrollbar />
      </div>
      <Taskbar />
      {/* Windows activation watermark sits above the page */}
      <div className="pointer-events-none absolute right-[91px] bottom-[90px] font-['Open_Sans',sans-serif] whitespace-nowrap text-[#8a8a8a]/60">
        <div className="text-[19px] leading-6">Activate Windows</div>
        <div className="text-[14px] leading-5">Go to Settings to activate Windows.</div>
      </div>
    </div>
  );
}
